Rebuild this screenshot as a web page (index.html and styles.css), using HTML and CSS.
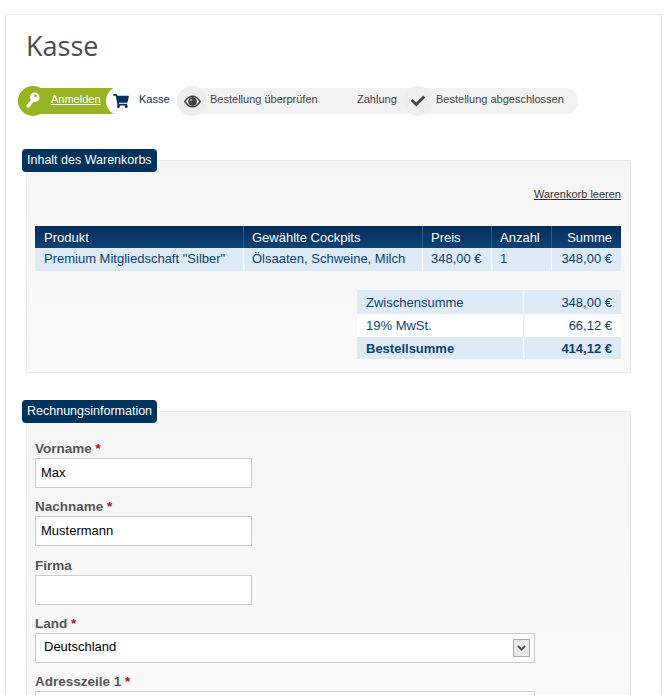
FILE: index.html
```html
<!DOCTYPE html>
<html lang="de">
<head>
<meta charset="utf-8">
<title>Kasse</title>
<link rel="stylesheet" href="styles.css">
</head>
<body>
<main class="page">
  <h1 class="title">Kasse</h1>
  <ol class="steps">
    <li class="step step-login">
      <span class="step-icon">
        <svg width="18" height="20" viewBox="0 0 18 20"><path d="M9.500 8.500 4.200 15" stroke="#fff" stroke-width="3.400" stroke-linecap="round" fill="none"/><circle cx="10.700" cy="6.300" r="4.800" fill="#fff"/><circle cx="11.500" cy="4.800" r="1.400" fill="#95b525"/></svg>
      </span>
      <a class="step-link" href="#">Anmelden</a>
    </li>
    <li class="step step-cart">
      <span class="step-icon">
        <svg width="16" height="14" viewBox="0 0 576 512"><path fill="#00335b" d="M528.12 301.319l47.273-208C578.806 78.301 567.391 64 551.99 64H159.208l-9.166-44.81C147.758 8.021 137.93 0 126.529 0H24C10.745 0 0 10.745 0 24v16c0 13.255 10.745 24 24 24h69.883l70.248 343.435C147.325 417.1 136 435.222 136 456c0 30.928 25.072 56 56 56s56-25.072 56-56c0-15.674-6.447-29.835-16.824-40h209.647C430.447 426.165 424 440.326 424 456c0 30.928 25.072 56 56 56s56-25.072 56-56c0-22.172-12.888-41.332-31.579-50.405l5.517-24.276c3.413-15.018-8.002-29.319-23.403-29.319H218.117l-6.545-32h293.145c11.206 0 20.92-7.754 23.403-18.681z"/></svg>
      </span>
      <span class="step-text">Kasse</span>
    </li>
    <li class="step step-todo step-review">
      <span class="step-icon">
        <svg width="17" height="13" viewBox="0 0 17 13"><path fill="#eee" stroke="#444" stroke-width="1.500" d="M.9 6.500C3 3 5.500 1.200 8.500 1.200S14 3 16.100 6.500C14 10 11.500 11.800 8.500 11.800S3 10 .9 6.500z"/><circle cx="8.500" cy="6.500" r="4.400" fill="#444"/><circle cx="7" cy="5" r="1.200" fill="#999"/></svg>
      </span>
      <span class="step-text">Bestellung überprüfen</span>
    </li>
    <li class="step step-todo step-pay">
      <span class="step-text">Zahlung</span>
    </li>
    <li class="step step-todo step-done">
      <span class="step-icon">
        <svg width="14" height="14" viewBox="0 0 512 512"><path fill="#444" d="M173.898 439.404l-166.4-166.4c-9.997-9.997-9.997-26.206 0-36.204l36.203-36.204c9.997-9.998 26.207-9.998 36.204 0L192 312.69 432.095 72.596c9.997-9.997 26.207-9.997 36.204 0l36.203 36.204c9.997 9.997 9.997 26.206 0 36.204l-294.4 294.401c-9.998 9.997-26.207 9.997-36.204-.001z"/></svg>
      </span>
      <span class="step-text">Bestellung abgeschlossen</span>
    </li>
  </ol>

  <fieldset class="panel panel-cart">
    <legend class="panel-title">Inhalt des Warenkorbs</legend>
    <p class="cart-actions"><a class="clear-link" href="#">Warenkorb leeren</a></p>
    <table class="items">
      <thead>
        <tr>
          <th class="col-product">Produkt</th>
          <th class="col-cockpits">Gewählte Cockpits</th>
          <th class="col-price">Preis</th>
          <th class="col-qty">Anzahl</th>
          <th class="col-sum num">Summe</th>
        </tr>
      </thead>
      <tbody>
        <tr>
          <td>Premium Mitgliedschaft "Silber"</td>
          <td>Ölsaaten, Schweine, Milch</td>
          <td>348,00 €</td>
          <td>1</td>
          <td class="num">348,00 €</td>
        </tr>
      </tbody>
    </table>
    <table class="totals">
      <tbody>
        <tr class="tinted first"><td class="totals-label">Zwischensumme</td><td class="num">348,00 €</td></tr>
        <tr class="plain"><td class="totals-label">19% MwSt.</td><td class="num">66,12 €</td></tr>
        <tr class="tinted grand"><td class="totals-label">Bestellsumme</td><td class="num">414,12 €</td></tr>
      </tbody>
    </table>
  </fieldset>

  <fieldset class="panel panel-billing">
    <legend class="panel-title">Rechnungsinformation</legend>
    <div class="field">
      <label class="field-label" for="vorname">Vorname <span class="req">*</span></label>
      <input class="text-input" id="vorname" type="text" value="Max">
    </div>
    <div class="field">
      <label class="field-label" for="nachname">Nachname <span class="req">*</span></label>
      <input class="text-input" id="nachname" type="text" value="Mustermann">
    </div>
    <div class="field">
      <label class="field-label" for="firma">Firma</label>
      <input class="text-input" id="firma" type="text">
    </div>
    <div class="field">
      <label class="field-label" for="land">Land <span class="req">*</span></label>
      <div class="select-wrap">
        <select class="select-input" id="land"><option>Deutschland</option></select>
        <span class="select-arrow">
          <svg width="9" height="6" viewBox="0 0 9 6"><path d="M1 1l3.500 3.500L8 1" fill="none" stroke="#555" stroke-width="2"/></svg>
        </span>
      </div>
    </div>
    <div class="field">
      <label class="field-label" for="adr1">Adresszeile 1 <span class="req">*</span></label>
      <input class="text-input text-input-wide" id="adr1" type="text">
    </div>
  </fieldset>
</main>
</body>
</html>
```
FILE: styles.css
```css
* { box-sizing: border-box; }
html, body { margin: 0; height: 695px; overflow: hidden; background: #fff; }
body { font-family: "Liberation Sans", Arial, sans-serif; color: #444; }

.page {
  margin: 14px 10px 0 5px;
  padding: 15px 30px 0 20px;
  border: 1px solid #e9e9e9;
  min-height: 900px;
}
.title {
  margin: 0 0 24px;
  font: 400 27px/32px "Open Sans", sans-serif;
  color: #4a4a4a;
}

/* Progress steps */
.steps {
  display: flex;
  align-items: center;
  height: 30px;
  margin: 0 0 33px -8px;
  padding: 0;
  list-style: none;
  font-size: 11px;
}
.step { display: flex; align-items: center; height: 26px; flex: none; }
.step-icon {
  display: flex;
  align-items: center;
  justify-content: center;
  width: 30px;
  height: 30px;
  border-radius: 50%;
  flex: none;
}
.step-text, .step-link { margin: 0 0 4px 3px; }

.step-login {
  width: 96px;
  background: #95b525;
  border-radius: 15px 0 0 15px;
}
.step-login .step-icon { background: #95b525; }
.step-link { color: #fff; }
.step-cart {
  position: relative;
  width: 71px;
  margin-left: -8px;
  color: #00335b;
}
.step-cart .step-icon { background: #fff; }
.step-todo { background: #f2f2f2; color: #444; }
.step-todo .step-icon { background: #eee; }
.step-review { width: 150px; border-radius: 15px 0 0 15px; }
.step-pay { width: 76px; padding-left: 27px; }
.step-done { width: 175px; border-radius: 0 13px 13px 0; }

/* Panels */
.panel {
  min-width: 0;
  margin: 0;
  padding: 0 9px 13px 8px;
  border: 1px solid #e9e9e9;
  background: linear-gradient(#f5f5f5, #fafafa);
}
.panel-title {
  height: 23px;
  margin-left: -13px;
  padding: 0 5px;
  border-radius: 4px;
  background: #00335b;
  color: #fff;
  font-size: 12.500px;
  line-height: 23px;
}
.panel-billing { margin-top: 27px; padding-top: 17px; }

.cart-actions { margin: 15px 0 24px; text-align: right; line-height: 15px; font-size: 11px; }
.clear-link { color: #333; }

/* Tables */
.items, .totals {
  border-collapse: separate;
  border-spacing: 0;
  font-size: 13px;
  color: #0b4474;
}
.items { width: 586px; margin-bottom: 19px; table-layout: fixed; }
.items th {
  height: 22px;
  padding: 0 8px;
  border-left: 1px solid #2b5d8e;
  background: linear-gradient(#052c5a, #0d4377);
  color: #fff;
  font-weight: 400;
  text-align: left;
}
.items td {
  height: 23px;
  padding: 0 8px 2px;
  border-left: 1px solid #fff;
  background: #deeaf6;
}
.items th:first-child, .items td:first-child { border-left: 0; padding-left: 9px; }
.items th:last-child, .items td:last-child { padding-right: 9px; }
.col-product { width: 208px; }
.col-cockpits { width: 179px; }
.col-price { width: 69px; }
.col-qty { width: 60px; }
.col-sum { width: 70px; }
.items .num, .totals .num { text-align: right; }

.totals { width: 264px; margin-left: auto; table-layout: fixed; }
.totals td { height: 23px; padding: 0 9px; }
.totals .totals-label { width: 167px; border-right: 1px solid #e3ebf3; }
.tinted td { background: #deeaf6; }
.tinted .totals-label { border-right-color: #fff; }
.plain td { background: #fff; }
.first td { height: 24px; }
.grand td { font-weight: 700; height: 22px; }

/* Billing form */
.field { height: 58.250px; }
.field-label {
  display: block;
  height: 18px;
  font-size: 13.500px;
  font-weight: 700;
  line-height: 18px;
  color: #555;
}
.req { color: #c00; }
.text-input, .select-input {
  display: block;
  height: 30px;
  border: 1px solid #ccc;
  border-radius: 0;
  background: #fff;
  color: #000;
  font: 13px "Liberation Sans", Arial, sans-serif;
  outline: 0;
}
.text-input { width: 217px; padding: 0 5px 2px; }
.text-input-wide { width: 500px; }
.select-wrap { position: relative; width: 500px; }
.select-input { width: 100%; padding: 0 8px 2px; appearance: none; }
.select-arrow {
  position: absolute;
  top: 6px;
  right: 5px;
  display: flex;
  align-items: center;
  justify-content: center;
  width: 17px;
  height: 18px;
  border: 1px solid #aaa;
  background: #e8e8e8;
}
```
